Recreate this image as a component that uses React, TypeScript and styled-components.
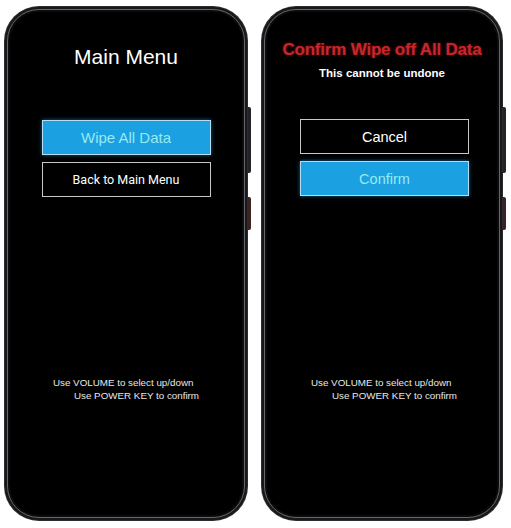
import styled, { createGlobalStyle } from 'styled-components';

const GlobalStyle = createGlobalStyle`
  html, body {
    margin: 0;
    padding: 0;
    background: #fff;
  }
  body {
    font-family: "Liberation Sans", Arial, sans-serif;
  }
`;

const Page = styled.div`
  width: 511px;
  height: 528px;
  display: flex;
  gap: 15px;
  padding: 7px 0 0 5px;
  box-sizing: border-box;
`;

const Phone = styled.div`
  position: relative;
  width: ${(p: { $w: number }) => p.$w}px;
  height: 513px;
  border-radius: 34px;
  background: #18181b;
  padding: 2px;
  box-sizing: border-box;
  box-shadow: 0 0 0 1px #2c2c30;
`;

const Frame = styled.div`
  height: 100%;
  border-radius: 32px;
  border: 1px solid #66666b;
  background: #0b0b0d;
  padding: 2px;
  box-sizing: border-box;
`;

const Screen = styled.div`
  height: 100%;
  border-radius: 29px;
  background: #000;
  display: flex;
  flex-direction: column;
  align-items: center;
  box-sizing: border-box;
  padding-bottom: 113px;
`;

const SideKey = styled.div<{ $top: number; $h: number; $red?: boolean }>`
  position: absolute;
  right: -4px;
  top: ${(p) => p.$top}px;
  width: 3px;
  height: ${(p) => p.$h}px;
  border-radius: 0 2px 2px 0;
  background: ${(p) => (p.$red ? '#3e2220' : '#232327')};
`;

const Header = styled.div<{ $top: number; $h: number }>`
  height: ${(p) => p.$h}px;
  width: 100%;
  display: flex;
  flex-direction: column;
  align-items: center;
  box-sizing: border-box;
  padding-top: ${(p) => p.$top}px;
`;

const MenuTitle = styled.div`
  color: #fff;
  font-family: "Liberation Sans", Arial, sans-serif;
  font-size: 21px;
  line-height: 24px;
`;

const WarnTitle = styled.div`
  color: #c8262b;
  font-family: "Liberation Sans", Arial, sans-serif;
  font-weight: bold;
  font-size: 17px;
  line-height: 20px;
  text-shadow: 0 0 3px rgba(200, 30, 40, 0.6);
  letter-spacing: -0.2px;
  white-space: nowrap;
`;

const SubTitle = styled.div`
  margin-top: 7px;
  color: #fff;
  font-family: "Liberation Sans", Arial, sans-serif;
  font-weight: bold;
  font-size: 11.5px;
  line-height: 13px;
`;

const Menu = styled.div`
  display: flex;
  flex-direction: column;
  gap: 7px;
  margin-left: ${(p: { $shift: number }) => p.$shift}px;
`;

const Item = styled.div<{ $active?: boolean; $font?: string; $size: number }>`
  width: 169px;
  height: 35px;
  box-sizing: border-box;
  display: flex;
  align-items: center;
  justify-content: center;
  border: 1px solid ${(p) => (p.$active ? '#b9dcf2' : '#c8c8c8')};
  background: ${(p) => (p.$active ? '#1ba0e2' : '#000')};
  color: ${(p) => (p.$active ? '#97eaf0' : '#fff')};
  font-family: ${(p) => p.$font || '"Liberation Sans", Arial, sans-serif'};
  font-size: ${(p) => p.$size}px;
  box-shadow: ${(p) => (p.$active ? '0 0 4px rgba(40, 170, 240, 0.6)' : 'none')};
`;

const Hint = styled.div`
  margin-top: auto;
  display: flex;
  flex-direction: column;
  color: #e8e8e8;
  font-family: "Liberation Sans", Arial, sans-serif;
  font-size: 9.8px;
  line-height: 13px;
`;

const HintLine = styled.span`
  padding-left: ${(p: { $indent: number }) => p.$indent}px;
  white-space: nowrap;
`;

const Hints = ({ shift }: { shift: number }) => (
  <Hint style={{ marginLeft: shift }}>
    <HintLine $indent={0}>Use VOLUME to select up/down</HintLine>
    <HintLine $indent={21}>Use POWER KEY to confirm</HintLine>
  </Hint>
);

export default function App() {
  return (
    <>
      <GlobalStyle />
      <Page>
        <Phone $w={242}>
          <Frame>
            <Screen>
              <Header $top={33} $h={108}>
                <MenuTitle>Main Menu</MenuTitle>
              </Header>
              <Menu $shift={0}>
                <Item $active $size={15}>Wipe All Data</Item>
                <Item $size={12.5} $font='Roboto, "Liberation Sans", sans-serif'>
                  Back to Main Menu
                </Item>
              </Menu>
              <Hints shift={0} />
            </Screen>
          </Frame>
          <SideKey $top={100} $h={66} />
          <SideKey $top={190} $h={33} $red />
        </Phone>
        <Phone $w={240}>
          <Frame>
            <Screen>
              <Header $top={28} $h={107}>
                <WarnTitle>Confirm Wipe off All Data</WarnTitle>
                <SubTitle>This cannot be undone</SubTitle>
              </Header>
              <Menu $shift={5}>
                <Item $size={14.5}>Cancel</Item>
                <Item $active $size={14.5}>Confirm</Item>
              </Menu>
              <Hints shift={4} />
            </Screen>
          </Frame>
          <SideKey $top={100} $h={66} />
          <SideKey $top={190} $h={33} $red />
        </Phone>
      </Page>
    </>
  );
}
